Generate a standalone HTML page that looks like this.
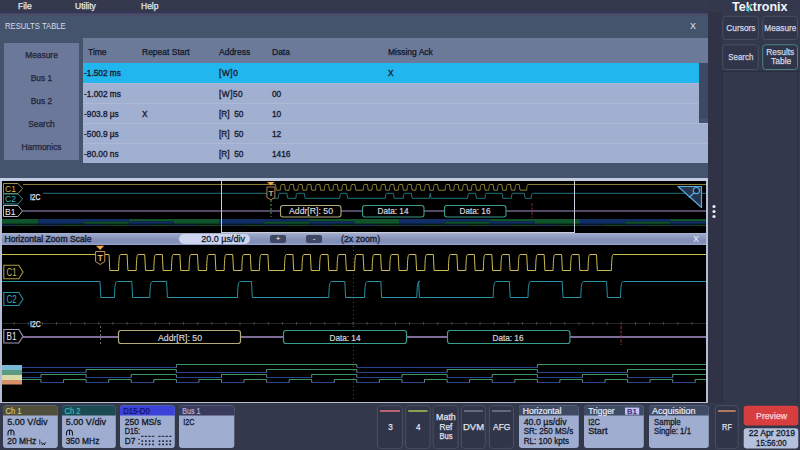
<!DOCTYPE html>
<html><head><meta charset="utf-8">
<style>
*{margin:0;padding:0;box-sizing:border-box}
html,body{width:800px;height:450px;overflow:hidden;background:#33384b;font-family:"Liberation Sans",sans-serif}
.a{position:absolute;white-space:nowrap}
#menu{left:0;top:0;width:800px;height:13px;background:linear-gradient(#363a4e 0,#34384c 80%,#33365a 100%)}
#menu span{position:absolute;top:0;color:#e6e8f0;font-size:8.5px;line-height:12px;-webkit-text-stroke:0.25px #e6e8f0}
#panel{left:0;top:13px;width:708px;height:165px;background:#43546c}
#title{left:5px;top:21px;color:#dfe4f0;font-size:9.4px;line-height:10px;transform:scaleX(0.82);transform-origin:left;color:#d4dcee}
#px{left:690px;top:21px;color:#dfe4f0;font-size:9px}
#lp{left:4px;top:43px;width:75px;height:117px;background:#6b7899}
#lp div{position:absolute;left:0;width:75px;text-align:center;color:#1e2438;font-size:8.4px;-webkit-text-stroke:0.25px #1e2438}
#thead{left:83px;top:38px;width:625px;height:25px;background:#6b7a99}
#thead span{position:absolute;top:9px;color:#111726;font-size:8.5px;-webkit-text-stroke:0.25px #111726}
.row{position:absolute;left:83px;width:625px;height:20px;background:#a1afd0;border-top:1px solid #aeb9d6}
.row span{position:absolute;top:5.2px;color:#1a2033;font-size:8.3px;-webkit-text-stroke:0.35px #1a2033}
#sidebar{left:708px;top:12px;width:92px;height:391px;background:#33384b}
.sb{position:absolute;border:1px solid #4a4f62;border-radius:3px;background:#2f3446;color:#d0d4e0;font-size:8.3px;text-align:center}
#scope{left:0;top:0}
.lbl{font-size:8px;fill:#fff;font-family:"Liberation Sans",sans-serif}
.badge{position:absolute;top:406px;height:42px;background:#a3aecb;border-radius:3px;overflow:hidden;white-space:nowrap}
.badge .h{height:11px;line-height:12px;font-size:8.4px;padding-left:4px;-webkit-text-stroke:0.2px currentColor}
.badge .b{color:#161b2b;font-size:8.8px;line-height:10px;padding-left:5px;padding-top:2px;-webkit-text-stroke:0.25px #161b2b}
.badge .b2{color:#161b2b;font-size:8.8px;line-height:10px;padding-left:5px;-webkit-text-stroke:0.25px #161b2b}
.badge .ic{height:10px;padding-left:5px;padding-top:1px}
.btn{position:absolute;top:405px;height:43px;border:1px solid #474c5e;border-radius:3px;background:#2e3344;color:#d8dce8;font-size:9px;text-align:center}
.btn i{position:absolute;left:3px;right:3px;top:5px;height:2px}
</style></head><body>
<div id="menu" class="a"><span style="left:18px">File</span><span style="left:75px">Utility</span><span style="left:141px">Help</span></div>
<div id="panel" class="a"></div>
<div class="a" style="left:0;top:13px;width:708px;height:3px;background:linear-gradient(#40425e,#4a4d69 40%,#474e68)"></div>
<div id="title" class="a">RESULTS TABLE</div>
<div id="px" class="a">X</div>
<div id="lp" class="a">
 <div style="top:7px">Measure</div>
 <div style="top:30px">Bus 1</div>
 <div style="top:53px">Bus 2</div>
 <div style="top:76px">Search</div>
 <div style="top:99px">Harmonics</div>
</div>
<div id="thead" class="a">
 <span style="left:5px">Time</span><span style="left:59px">Repeat Start</span><span style="left:136px">Address</span><span style="left:189px">Data</span><span style="left:305px">Missing Ack</span>
</div>
<div class="row" style="top:63px;background:#22b6ee;border-top:none;width:616px"><span style="left:1px">-1.502 ms</span><span style="left:136px;letter-spacing:0.6px">[W]0</span><span style="left:305px">X</span></div>
<div class="a" style="left:699px;top:63px;width:9px;height:56px;background:#3e4a64"></div>
<div class="row" style="top:83px;width:616px"><span style="left:1px">-1.002 ms</span><span style="left:136px;letter-spacing:0.5px">[W]50</span><span style="left:189px">00</span></div>
<div class="row" style="top:103px;width:616px"><span style="left:1px">-903.8 µs</span><span style="left:59px">X</span><span style="left:136px">[R]&nbsp; 50</span><span style="left:189px">10</span></div>
<div class="row" style="top:123px"><span style="left:1px">-500.9 µs</span><span style="left:136px">[R]&nbsp; 50</span><span style="left:189px">12</span></div>
<div class="row" style="top:143px"><span style="left:1px">-80.00 ns</span><span style="left:136px">[R]&nbsp; 50</span><span style="left:189px">1416</span></div>

<!-- sidebar -->
<div class="a" style="left:708px;top:0;width:92px;height:403px;background:#33384c"></div>
<div class="a" style="left:708px;top:12px;width:14px;height:391px;background:#2f3345"></div>
<div class="a" style="left:722px;top:72px;width:1px;height:331px;background:#2a2e3e"></div>
<div class="a" style="left:797px;top:72px;width:1px;height:331px;background:#2c3040"></div>
<div class="a" style="left:720px;top:71px;width:80px;height:1px;background:#2a2e3e"></div>

<!-- scope frame -->
<div class="a" style="left:0;top:178px;width:708px;height:226px;background:#b4bcd6"></div>
<div class="a" style="left:0;top:178px;width:708px;height:3px;background:#c4cce4"></div><div class="a" style="left:2px;top:181px;width:704px;height:52px;background:#000"></div>
<div class="a" style="left:2px;top:233px;width:704px;height:12px;background:linear-gradient(#aab4d0 0,#9aa6c8 15%,#8b97bd 40%,#808db6 70%,#8a96c0 90%,#a0aad0 100%)"></div>
<div class="a" style="left:2px;top:245px;width:704px;height:157px;background:#000"></div>
<div class="a" style="left:4.5px;top:233px;font-size:8.6px;line-height:12px;color:#141a30;-webkit-text-stroke:0.35px #141a30">Horizontal Zoom Scale</div>
<div class="a" style="left:179px;top:234px;width:71px;height:10px;border-radius:5px;background:#cdd6ee;font-size:9px;line-height:10px;color:#141a30;text-align:right;padding-right:5px;-webkit-text-stroke:0.3px #141a30">20.0 µs/div</div>
<div class="a" style="left:270px;top:235px;width:16px;height:8px;border-radius:2px;background:#3e4864;color:#fff;font-size:8px;line-height:8px;text-align:center">+</div>
<div class="a" style="left:306px;top:235px;width:16px;height:8px;border-radius:2px;background:#3e4864;color:#fff;font-size:8px;line-height:7px;text-align:center">-</div>
<div class="a" style="left:341px;top:233px;font-size:8.8px;line-height:12px;color:#141a30;-webkit-text-stroke:0.3px #141a30">(2x zoom)</div>
<div class="a" style="left:693px;top:233px;font-size:9px;line-height:12px;color:#f0f2f8">X</div>

<svg id="scope" class="a" width="800" height="450" viewBox="0 0 800 450">
<!-- grid -->
<path d="M2 323.5 H706" stroke="#262626" stroke-width="1" fill="none"/>
<path d="M14.1 322 V325 M28.2 322 V325 M42.4 322 V325 M56.5 322 V325 M70.6 322 V325 M84.7 322 V325 M98.8 322 V325 M113.0 322 V325 M127.1 322 V325 M141.2 322 V325 M155.3 322 V325 M169.4 322 V325 M183.6 322 V325 M197.7 322 V325 M211.8 322 V325 M225.9 322 V325 M240.0 322 V325 M254.2 322 V325 M268.3 322 V325 M282.4 322 V325 M296.5 322 V325 M310.6 322 V325 M324.8 322 V325 M338.9 322 V325 M353.0 322 V325 M367.1 322 V325 M381.2 322 V325 M395.4 322 V325 M409.5 322 V325 M423.6 322 V325 M437.7 322 V325 M451.8 322 V325 M466.0 322 V325 M480.1 322 V325 M494.2 322 V325 M508.3 322 V325 M522.4 322 V325 M536.6 322 V325 M550.7 322 V325 M564.8 322 V325 M578.9 322 V325 M593.0 322 V325 M607.2 322 V325 M621.3 322 V325 M635.4 322 V325 M649.5 322 V325 M663.6 322 V325 M677.8 322 V325 M691.9 322 V325" stroke="#444" stroke-width="1" fill="none"/>
<path d="M353.5 246 V402" stroke="#4a4a4a" stroke-width="1" stroke-dasharray="1 3" fill="none"/>
<!-- bus lines -->
<path d="M23 211 H706" stroke="#a890c8" stroke-width="1.2" fill="none"/>
<path d="M23 337 H706" stroke="#a890c8" stroke-width="1.5" fill="none"/>
<path d="M2 254.5 L109 254.5 L109.8 270.5 L118.6 270.5 C118.9 259.3 119.2 254.5 120.6 254.5 L127.1 254.5 L127.9 270.5 L136.2 270.5 C136.5 259.3 136.8 254.5 138.2 254.5 L144.7 254.5 L145.5 270.5 L153.8 270.5 C154.1 259.3 154.4 254.5 155.8 254.5 L162.3 254.5 L163.1 270.5 L171.4 270.5 C171.7 259.3 172 254.5 173.4 254.5 L179.9 254.5 L180.7 270.5 L189 270.5 C189.3 259.3 189.6 254.5 191 254.5 L197.5 254.5 L198.3 270.5 L206.6 270.5 C206.9 259.3 207.2 254.5 208.6 254.5 L215.1 254.5 L215.9 270.5 L224.2 270.5 C224.5 259.3 224.8 254.5 226.2 254.5 L232.7 254.5 L233.5 270.5 L241.8 270.5 C242.1 259.3 242.4 254.5 243.8 254.5 L250.3 254.5 L251.1 270.5 L259.4 270.5 C259.7 259.3 260 254.5 261.4 254.5 L267.9 254.5 L268.7 270.5 L284.4 270.5 C284.7 259.3 285 254.5 286.4 254.5 L292.9 254.5 L293.7 270.5 L301.9 270.5 C302.2 259.3 302.6 254.5 303.9 254.5 L310.4 254.5 L311.2 270.5 L319.5 270.5 C319.8 259.3 320.1 254.5 321.5 254.5 L328 254.5 L328.8 270.5 L337 270.5 C337.3 259.3 337.6 254.5 339 254.5 L345.5 254.5 L346.3 270.5 L354.6 270.5 C354.9 259.3 355.2 254.5 356.6 254.5 L363.1 254.5 L363.9 270.5 L372.1 270.5 C372.4 259.3 372.8 254.5 374.1 254.5 L380.6 254.5 L381.4 270.5 L389.7 270.5 C390 259.3 390.3 254.5 391.7 254.5 L398.2 254.5 L399 270.5 L407.2 270.5 C407.6 259.3 407.9 254.5 409.2 254.5 L415.8 254.5 L416.6 270.5 L424.8 270.5 C425.1 259.3 425.4 254.5 426.8 254.5 L433.3 254.5 L434.1 270.5 L448.4 270.5 C448.7 259.3 449 254.5 450.4 254.5 L456.9 254.5 L457.7 270.5 L465.8 270.5 C466.1 259.3 466.4 254.5 467.8 254.5 L474.3 254.5 L475.1 270.5 L483.3 270.5 C483.6 259.3 483.9 254.5 485.3 254.5 L491.8 254.5 L492.6 270.5 L500.8 270.5 C501.1 259.3 501.4 254.5 502.8 254.5 L509.2 254.5 L510.1 270.5 L518.2 270.5 C518.5 259.3 518.8 254.5 520.2 254.5 L526.7 254.5 L527.5 270.5 L535.6 270.5 C535.9 259.3 536.2 254.5 537.6 254.5 L544.1 254.5 L544.9 270.5 L553.1 270.5 C553.4 259.3 553.7 254.5 555.1 254.5 L561.6 254.5 L562.4 270.5 L570.5 270.5 C570.8 259.3 571.1 254.5 572.5 254.5 L579 254.5 L579.8 270.5 L588 270.5 C588.3 259.3 588.6 254.5 590 254.5 L596.5 254.5 L597.3 270.5 L611.4 270.5 C611.7 259.3 612 254.5 613.4 254.5 L706 254.5" stroke="#ccbc50" stroke-width="1" fill="none"/>
<path d="M2 281.5 L100 281.5 L100.8 297.5 L114.4 297.5 C114.7 286.3 115 281.5 117.4 281.5 L131.8 281.5 L132.6 297.5 L149.8 297.5 C150.1 286.3 150.4 281.5 152.8 281.5 L166.6 281.5 L167.4 297.5 L237.5 297.5 C237.8 286.3 238.1 281.5 240.5 281.5 L251.5 281.5 L252.3 297.5 L328.8 297.5 C329.1 286.3 329.4 281.5 331.8 281.5 L344.8 281.5 L345.6 297.5 L364.6 297.5 C364.9 286.3 365.2 281.5 367.6 281.5 L380.8 281.5 L381.6 297.5 L416.8 297.5 C417.1 286.3 417.4 281.5 419.8 281.5 L418.6 281.5 L419.4 297.5 L493.2 297.5 C493.5 286.3 493.8 281.5 496.2 281.5 L509.4 281.5 L510.2 297.5 L528 297.5 C528.3 286.3 528.6 281.5 531 281.5 L562.2 281.5 L563 297.5 L580.8 297.5 C581.1 286.3 581.4 281.5 583.8 281.5 L606.6 281.5 L607.4 297.5 L620.5 297.5 C620.8 286.3 621.1 281.5 623.5 281.5 L706 281.5" stroke="#2a90a4" stroke-width="1" fill="none"/>
<path d="M23 184.5 L275.5 184.5 L276.3 190.2 L280.3 190.2 C280.6 186.2 280.9 184.5 281.5 184.5 L284.6 184.5 L285.4 190.2 L289.1 190.2 C289.4 186.2 289.7 184.5 290.3 184.5 L293.4 184.5 L294.2 190.2 L297.9 190.2 C298.2 186.2 298.5 184.5 299.1 184.5 L302.1 184.5 L302.9 190.2 L306.7 190.2 C307 186.2 307.3 184.5 307.9 184.5 L310.9 184.5 L311.8 190.2 L315.5 190.2 C315.8 186.2 316.1 184.5 316.7 184.5 L319.8 184.5 L320.6 190.2 L324.3 190.2 C324.6 186.2 324.9 184.5 325.5 184.5 L328.6 184.5 L329.4 190.2 L333.1 190.2 C333.4 186.2 333.7 184.5 334.3 184.5 L337.4 184.5 L338.2 190.2 L341.9 190.2 C342.2 186.2 342.5 184.5 343.1 184.5 L346.1 184.5 L346.9 190.2 L350.7 190.2 C351 186.2 351.3 184.5 351.9 184.5 L354.9 184.5 L355.8 190.2 L363.2 190.2 C363.5 186.2 363.8 184.5 364.4 184.5 L367.4 184.5 L368.2 190.2 L372 190.2 C372.3 186.2 372.6 184.5 373.2 184.5 L376.2 184.5 L377 190.2 L380.8 190.2 C381.1 186.2 381.4 184.5 381.9 184.5 L385 184.5 L385.8 190.2 L389.5 190.2 C389.8 186.2 390.1 184.5 390.7 184.5 L393.8 184.5 L394.6 190.2 L398.3 190.2 C398.6 186.2 398.9 184.5 399.5 184.5 L402.5 184.5 L403.3 190.2 L407.1 190.2 C407.4 186.2 407.7 184.5 408.3 184.5 L411.3 184.5 L412.1 190.2 L415.9 190.2 C416.2 186.2 416.5 184.5 417.1 184.5 L420.1 184.5 L420.9 190.2 L424.6 190.2 C424.9 186.2 425.2 184.5 425.8 184.5 L428.9 184.5 L429.7 190.2 L433.4 190.2 C433.7 186.2 434 184.5 434.6 184.5 L437.6 184.5 L438.4 190.2 L445.2 190.2 C445.5 186.2 445.8 184.5 446.4 184.5 L449.4 184.5 L450.2 190.2 L453.9 190.2 C454.2 186.2 454.5 184.5 455.1 184.5 L458.2 184.5 L459 190.2 L462.6 190.2 C462.9 186.2 463.2 184.5 463.8 184.5 L466.9 184.5 L467.7 190.2 L471.4 190.2 C471.7 186.2 472 184.5 472.6 184.5 L475.6 184.5 L476.4 190.2 L480.1 190.2 C480.4 186.2 480.7 184.5 481.3 184.5 L484.3 184.5 L485.1 190.2 L488.8 190.2 C489.1 186.2 489.4 184.5 490 184.5 L493.1 184.5 L493.9 190.2 L497.5 190.2 C497.8 186.2 498.1 184.5 498.7 184.5 L501.8 184.5 L502.6 190.2 L506.3 190.2 C506.6 186.2 506.9 184.5 507.5 184.5 L510.5 184.5 L511.3 190.2 L515 190.2 C515.3 186.2 515.6 184.5 516.2 184.5 L519.2 184.5 L520 190.2 L526.7 190.2 C527 186.2 527.3 184.5 527.9 184.5 L706 184.5" stroke="#9a8c3c" stroke-width="0.9" fill="none"/>
<path d="M43 193.3 L271 193.3 L271.8 198.3 L278.2 198.3 C278.5 194.8 278.8 193.3 279.4 193.3 L286.9 193.3 L287.7 198.3 L295.9 198.3 C296.2 194.8 296.5 193.3 297.1 193.3 L304.3 193.3 L305.1 198.3 L339.8 198.3 C340.1 194.8 340.4 193.3 340.9 193.3 L346.8 193.3 L347.6 198.3 L385.4 198.3 C385.7 194.8 386 193.3 386.6 193.3 L393.4 193.3 L394.2 198.3 L403.3 198.3 C403.6 194.8 403.9 193.3 404.5 193.3 L411.4 193.3 L412.2 198.3 L429.4 198.3 C429.7 194.8 430 193.3 430.6 193.3 L430.3 193.3 L431.1 198.3 L467.6 198.3 C467.9 194.8 468.2 193.3 468.8 193.3 L475.7 193.3 L476.5 198.3 L485 198.3 C485.3 194.8 485.6 193.3 486.2 193.3 L502.1 193.3 L502.9 198.3 L511.4 198.3 C511.7 194.8 512 193.3 512.6 193.3 L524.3 193.3 L525.1 198.3 L531.2 198.3 C531.5 194.8 531.9 193.3 532.5 193.3 L706 193.3" stroke="#23808c" stroke-width="0.9" fill="none"/>
<path d="M176.4 364.5 H356.9 M537.4 364.5 H706 M86.1 369.5 H176.3 M266.6 369.5 H356.8 M447.1 369.5 H537.3 M627.5 369.5 H706 M41 374.5 H86.1 M131.2 374.5 H176.4 M221.5 374.5 H266.6 M311.7 374.5 H356.8 M402 374.5 H447.1 M492.2 374.5 H537.3 M582.4 374.5 H627.6 M672.7 374.5 H706 M22 379.5 H41 M63.6 379.5 H86.1 M108.7 379.5 H131.2 M153.8 379.5 H176.4 M198.9 379.5 H221.5 M244 379.5 H266.6 M289.2 379.5 H311.7 M334.3 379.5 H356.8 M379.4 379.5 H402 M424.5 379.5 H447.1 M469.6 379.5 H492.2 M514.8 379.5 H537.3 M559.9 379.5 H582.4 M605 379.5 H627.6 M650.1 379.5 H672.7 M695.2 379.5 H706" stroke="#3a9464" stroke-width="1" fill="none"/>
<path d="M22 367.5 H176.4 M356.9 367.5 H537.4 M22 372.5 H86.1 M176.3 372.5 H266.6 M356.8 372.5 H447.1 M537.3 372.5 H627.5 M22 377.5 H41 M86.1 377.5 H131.2 M176.4 377.5 H221.5 M266.6 377.5 H311.7 M356.8 377.5 H402 M447.1 377.5 H492.2 M537.3 377.5 H582.4 M627.6 377.5 H672.7 M41 382.5 H63.6 M86.1 382.5 H108.7 M131.2 382.5 H153.8 M176.4 382.5 H198.9 M221.5 382.5 H244 M266.6 382.5 H289.2 M311.7 382.5 H334.3 M356.8 382.5 H379.4 M402 382.5 H424.5 M447.1 382.5 H469.6 M492.2 382.5 H514.8 M537.3 382.5 H559.9 M582.4 382.5 H605 M627.6 382.5 H650.1 M672.7 382.5 H695.2" stroke="#2a4490" stroke-width="1" fill="none"/>
<path d="M176.4 364.5 V367.5 M356.9 364.5 V367.5 M537.4 364.5 V367.5 M86.1 369.5 V372.5 M176.3 369.5 V372.5 M266.6 369.5 V372.5 M356.8 369.5 V372.5 M447.1 369.5 V372.5 M537.3 369.5 V372.5 M627.5 369.5 V372.5 M41 374.5 V377.5 M86.1 374.5 V377.5 M131.2 374.5 V377.5 M176.4 374.5 V377.5 M221.5 374.5 V377.5 M266.6 374.5 V377.5 M311.7 374.5 V377.5 M356.8 374.5 V377.5 M402 374.5 V377.5 M447.1 374.5 V377.5 M492.2 374.5 V377.5 M537.3 374.5 V377.5 M582.4 374.5 V377.5 M627.6 374.5 V377.5 M672.7 374.5 V377.5 M41 379.5 V382.5 M63.6 379.5 V382.5 M86.1 379.5 V382.5 M108.7 379.5 V382.5 M131.2 379.5 V382.5 M153.8 379.5 V382.5 M176.4 379.5 V382.5 M198.9 379.5 V382.5 M221.5 379.5 V382.5 M244 379.5 V382.5 M266.6 379.5 V382.5 M289.2 379.5 V382.5 M311.7 379.5 V382.5 M334.3 379.5 V382.5 M356.8 379.5 V382.5 M379.4 379.5 V382.5 M402 379.5 V382.5 M424.5 379.5 V382.5 M447.1 379.5 V382.5 M469.6 379.5 V382.5 M492.2 379.5 V382.5 M514.8 379.5 V382.5 M537.3 379.5 V382.5 M559.9 379.5 V382.5 M582.4 379.5 V382.5 M605 379.5 V382.5 M627.6 379.5 V382.5 M650.1 379.5 V382.5 M672.7 379.5 V382.5 M695.2 379.5 V382.5" stroke="#7898a8" stroke-width="0.9" fill="none"/>
<path d="M2 220.2 H38.5 M128.7 220.2 H219 M309.2 220.2 H399.4 M489.7 220.2 H579.9 M670.2 220.2 H706 M2 222.6 H38.4 M83.6 222.6 H128.7 M173.8 222.6 H218.9 M264.1 222.6 H309.2 M354.3 222.6 H399.4 M444.5 222.6 H489.7 M534.8 222.6 H579.9 M625 222.6 H670.1" stroke="#17703a" stroke-width="2.4" fill="none" opacity="0.75"/>
<path d="M38.5 220.2 H128.7 M219 220.2 H309.2 M399.4 220.2 H489.7 M579.9 220.2 H670.2 M38.4 222.6 H83.6 M128.7 222.6 H173.8 M218.9 222.6 H264.1 M309.2 222.6 H354.3 M399.4 222.6 H444.5 M489.7 222.6 H534.8 M579.9 222.6 H625 M670.1 222.6 H706" stroke="#173c88" stroke-width="2.4" fill="none" opacity="0.75"/>
<path d="M15.9 225.2 H38.5 M61 225.2 H83.6 M106.1 225.2 H128.7 M151.3 225.2 H173.8 M196.4 225.2 H218.9 M241.5 225.2 H264.1 M286.6 225.2 H309.2 M331.7 225.2 H354.3 M376.9 225.2 H399.4 M422 225.2 H444.5 M467.1 225.2 H489.7 M512.2 225.2 H534.8 M557.3 225.2 H579.9 M602.5 225.2 H625 M647.6 225.2 H670.1 M692.7 225.2 H706" stroke="#1f6a40" stroke-width="0.9" fill="none"/>
<path d="M2 225.2 H15.9 M38.5 225.2 H61 M83.6 225.2 H106.1 M128.7 225.2 H151.3 M173.8 225.2 H196.4 M218.9 225.2 H241.5 M264.1 225.2 H286.6 M309.2 225.2 H331.7 M354.3 225.2 H376.9 M399.4 225.2 H422 M444.5 225.2 H467.1 M489.7 225.2 H512.2 M534.8 225.2 H557.3 M579.9 225.2 H602.5 M625 225.2 H647.6 M670.1 225.2 H692.7" stroke="#2a4a80" stroke-width="0.9" fill="none"/>
<!-- zoom box in overview -->
<rect x="221.5" y="180.5" width="353" height="52" stroke="#c8ccd8" stroke-width="1" fill="none"/>
<!-- decode boxes zoom -->
<rect x="118.5" y="330.5" width="122" height="13" rx="2.5" stroke="#b4ac78" stroke-width="1.2" fill="#000"/>
<rect x="283.5" y="330.5" width="123" height="13" rx="2.5" stroke="#3a9c8c" stroke-width="1.2" fill="#000"/>
<rect x="447.5" y="330.5" width="122.5" height="13" rx="2.5" stroke="#3a9c8c" stroke-width="1.2" fill="#000"/>
<text x="180" y="341" text-anchor="middle" class="lbl" style="font-size:8.7px;fill:#d4d4dc;stroke:#d4d4dc;stroke-width:0.2">Addr[R]: 50</text>
<text x="345" y="341" text-anchor="middle" class="lbl" style="font-size:8.2px;fill:#d4d4dc;stroke:#d4d4dc;stroke-width:0.2">Data: 14</text>
<text x="508" y="341" text-anchor="middle" class="lbl" style="font-size:8.2px;fill:#d4d4dc;stroke:#d4d4dc;stroke-width:0.2">Data: 16</text>
<!-- decode boxes overview -->
<rect x="280.5" y="205.5" width="60.5" height="11.5" rx="2.5" stroke="#b4ac78" stroke-width="1.1" fill="#000"/>
<rect x="362.5" y="205.5" width="61.5" height="11.5" rx="2.5" stroke="#3a9c8c" stroke-width="1.1" fill="#000"/>
<rect x="444.5" y="205.5" width="61.5" height="11.5" rx="2.5" stroke="#3a9c8c" stroke-width="1.1" fill="#000"/>
<text x="311" y="214" text-anchor="middle" class="lbl" style="font-size:8.7px;fill:#d4d4dc;stroke:#d4d4dc;stroke-width:0.2">Addr[R]: 50</text>
<text x="393" y="214" text-anchor="middle" class="lbl" style="font-size:8.2px;fill:#d4d4dc;stroke:#d4d4dc;stroke-width:0.2">Data: 14</text>
<text x="475" y="214" text-anchor="middle" class="lbl" style="font-size:8.2px;fill:#d4d4dc;stroke:#d4d4dc;stroke-width:0.2">Data: 16</text>
<!-- markers -->
<path d="M100.5 326 V346" stroke="#607858" stroke-width="1" stroke-dasharray="2 2"/>
<path d="M621 326 V345" stroke="#b03848" stroke-width="0.9" stroke-dasharray="3 1.5"/>
<path d="M271 200 V217" stroke="#60a050" stroke-width="1" stroke-dasharray="2 2"/>
<path d="M532 203 V218" stroke="#a03040" stroke-width="0.8" stroke-dasharray="3 1.5"/>
<!-- trigger markers -->
<path d="M96 245.7 H104.2 L100.1 250 Z" fill="#f4a848"/>
<path d="M95.6 251.5 H104.8 V261.5 L100.2 264.5 L95.6 261.5 Z" stroke="#c89060" stroke-width="1" fill="#000"/>
<text x="100.2" y="260.5" text-anchor="middle" style="font-size:9px;fill:#f0c890;font-family:Liberation Sans;stroke:#f0c890;stroke-width:0.2">T</text>
<path d="M267 182 H274.6 L270.8 185.6 Z" fill="#f0a040"/>
<path d="M266.9 187 H274.9 V197.5 L270.9 199.7 L266.9 197.5 Z" stroke="#c89060" stroke-width="0.9" fill="#000"/>
<text x="270.9" y="195.5" text-anchor="middle" style="font-size:8px;fill:#f0c890;font-family:Liberation Sans;stroke:#f0c890;stroke-width:0.2">T</text>
<!-- zoom labels -->
<path d="M3.8 265.3 H18.8 L23 272 L18.8 278.7 H3.8 Z" stroke="#a89a48" stroke-width="1.1" fill="#000"/>
<text x="6.5" y="275.8" textLength="10" lengthAdjust="spacingAndGlyphs" style="font-size:10px;fill:#c8bc68;font-family:Liberation Sans">C1</text>
<path d="M3.8 292.5 H18.8 L23 299 L18.8 305.5 H3.8 Z" stroke="#2a90a0" stroke-width="1.1" fill="#000"/>
<text x="6.5" y="303" textLength="10" lengthAdjust="spacingAndGlyphs" style="font-size:10px;fill:#40b0c0;font-family:Liberation Sans">C2</text>
<path d="M3.8 329.5 H18.8 L23 336.3 L18.8 343 H3.8 Z" stroke="#a898c0" stroke-width="1.1" fill="#000"/>
<text x="6.5" y="340" textLength="10" lengthAdjust="spacingAndGlyphs" style="font-size:10px;fill:#e8e4f4;font-family:Liberation Sans">B1</text>
<text x="30" y="326.5" textLength="10.6" lengthAdjust="spacingAndGlyphs" style="font-size:9.5px;fill:#e8e8f0;stroke:#e8e8f0;stroke-width:0.25;font-family:Liberation Sans">I2C</text>
<!-- overview labels -->
<path d="M3.5 183.5 H18 L22.5 188.5 L18 193.5 H3.5 Z" stroke="#9a8c48" stroke-width="1" fill="#000"/>
<text x="5" y="191.5" style="font-size:8.5px;fill:#c8b850;font-family:Liberation Sans">C1</text>
<path d="M3.5 194 H18 L22.5 199 L18 204 H3.5 Z" stroke="#2a8898" stroke-width="1" fill="#000"/>
<text x="5" y="202" style="font-size:8.5px;fill:#38b8c8;font-family:Liberation Sans">C2</text>
<path d="M3.5 205.5 H18 L22.5 211 L18 216.5 H3.5 Z" stroke="#b8b4c8" stroke-width="1" fill="#000"/>
<text x="5" y="214.5" style="font-size:8.5px;fill:#f0f0f8;font-family:Liberation Sans">B1</text>
<text x="30" y="200" textLength="10.5" lengthAdjust="spacingAndGlyphs" style="font-size:9px;fill:#e8e8f0;stroke:#e8e8f0;stroke-width:0.25;font-family:Liberation Sans">I2C</text>
<!-- digital label block -->
<rect x="2" y="365" width="20" height="5" fill="#7ab8d8"/>
<rect x="2" y="370" width="20" height="5" fill="#5a9a80"/>
<rect x="2" y="375" width="20" height="5" fill="#d8d8a8"/>
<rect x="2" y="380" width="20" height="4.5" fill="#d8906a"/>
<!-- magnifier -->
<path d="M678 186.5 H701.5 V207.5 Z" stroke="#58ace0" stroke-width="1.2" stroke-linejoin="round" fill="#26344e"/>
<circle cx="696.4" cy="190.6" r="3.1" stroke="#58ace0" stroke-width="1.2" fill="#1a2438"/>
<path d="M694.2 192.8 L689 197.5" stroke="#58ace0" stroke-width="1.3"/>
<!-- ellipsis -->
<circle cx="714" cy="206.5" r="1.6" fill="#e8ecf4"/>
<circle cx="714" cy="211.5" r="1.6" fill="#e8ecf4"/>
<circle cx="714" cy="216.5" r="1.6" fill="#e8ecf4"/>
</svg>

<!-- bottom bar -->
<div class="a" style="left:0;top:403px;width:800px;height:47px;background:#33384b"></div>
<svg class="a" style="left:0;top:0" width="800" height="450" viewBox="0 0 800 450" font-family="Liberation Sans">
<rect x="3" y="405.6" width="54.8" height="42.4" rx="3" fill="#9fadd0"/><path d="M3 415.4 V408.6 Q3 405.6 6 405.6 H54.8 Q57.8 405.6 57.8 408.6 V415.4 Z" fill="#4f4f3c"/>
<rect x="62" y="405.6" width="53.8" height="42.4" rx="3" fill="#9fadd0"/><path d="M62 415.4 V408.6 Q62 405.6 65 405.6 H112.8 Q115.8 405.6 115.8 408.6 V415.4 Z" fill="#1a4b52"/>
<rect x="120" y="405.6" width="54.8" height="42.4" rx="3" fill="#9fadd0"/><path d="M120 415.4 V408.6 Q120 405.6 123 405.6 H171.8 Q174.8 405.6 174.8 408.6 V415.4 Z" fill="#3a42da"/>
<rect x="179" y="405.6" width="55.3" height="42.4" rx="3" fill="#9fadd0"/><path d="M179 415.4 V408.6 Q179 405.6 182 405.6 H231.3 Q234.3 405.6 234.3 408.6 V415.4 Z" fill="#3a3a5c"/>
<rect x="519" y="405.6" width="59.8" height="42.4" rx="3" fill="#9fadd0"/><path d="M519 415.4 V408.6 Q519 405.6 522 405.6 H575.8 Q578.8 405.6 578.8 408.6 V415.4 Z" fill="#3f4b65"/>
<rect x="584" y="405.6" width="59.8" height="42.4" rx="3" fill="#9fadd0"/><path d="M584 415.4 V408.6 Q584 405.6 587 405.6 H640.8 Q643.8 405.6 643.8 408.6 V415.4 Z" fill="#3f4b65"/>
<rect x="649" y="405.6" width="59.8" height="42.4" rx="3" fill="#9fadd0"/><path d="M649 415.4 V408.6 Q649 405.6 652 405.6 H705.8 Q708.8 405.6 708.8 408.6 V415.4 Z" fill="#3f4b65"/>
<text x="5.6" y="414.2" font-size="8.41" fill="#cfc770" stroke="#cfc770" stroke-width="0.2" textLength="15.9" lengthAdjust="spacingAndGlyphs">Ch 1</text>
<text x="64.6" y="414.2" font-size="8.41" fill="#40b8bc" stroke="#40b8bc" stroke-width="0.2" textLength="15.9" lengthAdjust="spacingAndGlyphs">Ch 2</text>
<text x="123.2" y="414.2" font-size="8.41" fill="#101062" stroke="#101062" stroke-width="0.2" textLength="26.5" lengthAdjust="spacingAndGlyphs">D15-D0</text>
<text x="182.2" y="414.2" font-size="8.41" fill="#b4b4dc" stroke="#b4b4dc" stroke-width="0.2" textLength="18.4" lengthAdjust="spacingAndGlyphs">Bus 1</text>
<text x="522.7" y="414.2" font-size="8.41" fill="#e8ecf8" stroke="#e8ecf8" stroke-width="0.2" textLength="38.8" lengthAdjust="spacingAndGlyphs">Horizontal</text>
<text x="588.2" y="414.2" font-size="8.41" fill="#e8ecf8" stroke="#e8ecf8" stroke-width="0.2" textLength="26.5" lengthAdjust="spacingAndGlyphs">Trigger</text>
<text x="652.0" y="414.2" font-size="8.41" fill="#e8ecf8" stroke="#e8ecf8" stroke-width="0.2" textLength="43.6" lengthAdjust="spacingAndGlyphs">Acquisition</text>
<rect x="625" y="407.6" width="14.2" height="7.1" fill="#c8c0f8"/>
<text x="627.0" y="414.0" font-size="8.12" fill="#302870" stroke="#302870" stroke-width="0.25" textLength="10.0" lengthAdjust="spacingAndGlyphs">B1</text>
<text x="7.2" y="424.6" font-size="8.41" fill="#161b2b" stroke="#161b2b" stroke-width="0.3" textLength="40.3" lengthAdjust="spacingAndGlyphs">5.00 V/div</text>
<text x="7.2" y="444.4" font-size="8.41" fill="#161b2b" stroke="#161b2b" stroke-width="0.3" textLength="29.1" lengthAdjust="spacingAndGlyphs">20 MHz</text>
<text x="65.7" y="424.6" font-size="8.41" fill="#161b2b" stroke="#161b2b" stroke-width="0.3" textLength="40.3" lengthAdjust="spacingAndGlyphs">5.00 V/div</text>
<text x="65.7" y="444.4" font-size="8.41" fill="#161b2b" stroke="#161b2b" stroke-width="0.3" textLength="33.7" lengthAdjust="spacingAndGlyphs">350 MHz</text>
<path d="M8.0 435.5 V433 A3 3 0 0 1 14.0 433 V435.5 M11.0 430.5 V435" stroke="#161b2b" stroke-width="1.1" fill="none"/>
<path d="M66.5 435.5 V433 A3 3 0 0 1 72.5 433 V435.5 M69.5 430.5 V435" stroke="#161b2b" stroke-width="1.1" fill="none"/>
<path d="M39.8 439.5 V444.5 M41.5 442 L42.5 445 L43.5 443 L44.5 445 L45.3 442" stroke="#161b2b" stroke-width="0.8" fill="none"/>
<text x="124.7" y="424.6" font-size="8.41" fill="#161b2b" stroke="#161b2b" stroke-width="0.3" textLength="36.3" lengthAdjust="spacingAndGlyphs">250 MS/s</text>
<text x="124.7" y="434.4" font-size="8.41" fill="#161b2b" stroke="#161b2b" stroke-width="0.3" textLength="15.3" lengthAdjust="spacingAndGlyphs">D15:</text>
<text x="124.7" y="444.4" font-size="8.41" fill="#161b2b" stroke="#161b2b" stroke-width="0.3" textLength="15.3" lengthAdjust="spacingAndGlyphs">D7 :</text>
<path d="M141.0 436.3 h2.6 M144.6 436.3 h2.6 M148.2 436.3 h2.6 M151.8 436.3 h2.6 M158.2 436.3 h2.6 M161.8 436.3 h2.6 M165.4 436.3 h2.6 M169.0 436.3 h2.6" stroke="#161b2b" stroke-width="1"/>
<rect x="141.5" y="440.3" width="1.6" height="1.6" fill="#161b2b"/><rect x="141.5" y="443.6" width="1.6" height="1.6" fill="#161b2b"/><rect x="145.1" y="440.3" width="1.6" height="1.6" fill="#161b2b"/><rect x="145.1" y="443.6" width="1.6" height="1.6" fill="#161b2b"/><rect x="148.7" y="440.3" width="1.6" height="1.6" fill="#161b2b"/><rect x="148.7" y="443.6" width="1.6" height="1.6" fill="#161b2b"/><rect x="152.3" y="440.3" width="1.6" height="1.6" fill="#161b2b"/><rect x="152.3" y="443.6" width="1.6" height="1.6" fill="#161b2b"/><rect x="158.7" y="440.3" width="1.6" height="1.6" fill="#161b2b"/><rect x="158.7" y="443.6" width="1.6" height="1.6" fill="#161b2b"/><rect x="162.3" y="440.3" width="1.6" height="1.6" fill="#161b2b"/><rect x="162.3" y="443.6" width="1.6" height="1.6" fill="#161b2b"/><rect x="165.9" y="440.3" width="1.6" height="1.6" fill="#161b2b"/><rect x="165.9" y="443.6" width="1.6" height="1.6" fill="#161b2b"/><rect x="169.5" y="440.3" width="1.6" height="1.6" fill="#161b2b"/><rect x="169.5" y="443.6" width="1.6" height="1.6" fill="#161b2b"/>
<text x="183.2" y="424.6" font-size="8.41" fill="#161b2b" stroke="#161b2b" stroke-width="0.3" textLength="11.2" lengthAdjust="spacingAndGlyphs">I2C</text>
<text x="523.7" y="424.6" font-size="8.41" fill="#161b2b" stroke="#161b2b" stroke-width="0.3" textLength="42.9" lengthAdjust="spacingAndGlyphs">40.0 µs/div</text>
<text x="523.7" y="434.4" font-size="8.41" fill="#161b2b" stroke="#161b2b" stroke-width="0.3" textLength="49.5" lengthAdjust="spacingAndGlyphs">SR: 250 MS/s</text>
<text x="523.7" y="444.4" font-size="8.41" fill="#161b2b" stroke="#161b2b" stroke-width="0.3" textLength="45.4" lengthAdjust="spacingAndGlyphs">RL: 100 kpts</text>
<text x="588.2" y="424.6" font-size="8.41" fill="#161b2b" stroke="#161b2b" stroke-width="0.3" textLength="11.8" lengthAdjust="spacingAndGlyphs">I2C</text>
<text x="588.2" y="434.4" font-size="8.41" fill="#161b2b" stroke="#161b2b" stroke-width="0.3" textLength="19.4" lengthAdjust="spacingAndGlyphs">Start</text>
<text x="654.0" y="424.6" font-size="8.41" fill="#161b2b" stroke="#161b2b" stroke-width="0.3" textLength="26.7" lengthAdjust="spacingAndGlyphs">Sample</text>
<text x="654.0" y="434.4" font-size="8.41" fill="#161b2b" stroke="#161b2b" stroke-width="0.3" textLength="37.0" lengthAdjust="spacingAndGlyphs">Single: 1/1</text>
<rect x="377.5" y="405.7" width="25.0" height="42.7" rx="3" fill="#30354a" stroke="#4a4f62" stroke-width="1"/><path d="M380 411 H400" stroke="#c86878" stroke-width="1.8"/>
<rect x="405.7" y="405.7" width="24.3" height="42.7" rx="3" fill="#30354a" stroke="#4a4f62" stroke-width="1"/><path d="M408.2 411 H427.5" stroke="#90b050" stroke-width="1.8"/>
<rect x="433.2" y="405.7" width="24.9" height="42.7" rx="3" fill="#30354a" stroke="#4a4f62" stroke-width="1"/>
<rect x="461.5" y="405.7" width="23.8" height="42.7" rx="3" fill="#30354a" stroke="#4a4f62" stroke-width="1"/><path d="M464 411 H482.8" stroke="#6c7080" stroke-width="1.8"/>
<rect x="489.5" y="405.7" width="24.0" height="42.7" rx="3" fill="#30354a" stroke="#4a4f62" stroke-width="1"/><path d="M492 411 H511" stroke="#6c7080" stroke-width="1.8"/>
<rect x="715.5" y="405.7" width="22.7" height="42.7" rx="3" fill="#30354a" stroke="#4a4f62" stroke-width="1"/><path d="M718 411 H735.7" stroke="#c08060" stroke-width="1.8"/>
<text x="388.3" y="429.9" font-size="9.28" fill="#e0e4ee" stroke="#e0e4ee" stroke-width="0.25" textLength="4.5" lengthAdjust="spacingAndGlyphs">3</text>
<text x="415.9" y="429.9" font-size="9.28" fill="#e0e4ee" stroke="#e0e4ee" stroke-width="0.25" textLength="4.5" lengthAdjust="spacingAndGlyphs">4</text>
<text x="436.1" y="419.7" font-size="8.99" fill="#e0e4ee" stroke="#e0e4ee" stroke-width="0.25" textLength="19.7" lengthAdjust="spacingAndGlyphs">Math</text>
<text x="439.5" y="429.9" font-size="8.99" fill="#e0e4ee" stroke="#e0e4ee" stroke-width="0.25" textLength="12.9" lengthAdjust="spacingAndGlyphs">Ref</text>
<text x="439.5" y="439.4" font-size="8.99" fill="#e0e4ee" stroke="#e0e4ee" stroke-width="0.25" textLength="12.9" lengthAdjust="spacingAndGlyphs">Bus</text>
<text x="463.0" y="429.9" font-size="9.28" fill="#e0e4ee" stroke="#e0e4ee" stroke-width="0.25" textLength="21.0" lengthAdjust="spacingAndGlyphs">DVM</text>
<text x="493.0" y="429.9" font-size="9.28" fill="#e0e4ee" stroke="#e0e4ee" stroke-width="0.25" textLength="17.5" lengthAdjust="spacingAndGlyphs">AFG</text>
<text x="722.1" y="429.9" font-size="9.28" fill="#e0e4ee" stroke="#e0e4ee" stroke-width="0.25" textLength="9.9" lengthAdjust="spacingAndGlyphs">RF</text>
<rect x="743.7" y="405.7" width="54.6" height="19.7" rx="3" fill="#d83e40"/>
<text x="756.1" y="418.6" font-size="8.41" fill="#f8d8d8" stroke="#f8d8d8" stroke-width="0.25" textLength="30.9" lengthAdjust="spacingAndGlyphs">Preview</text>
<rect x="743.7" y="428.2" width="54.6" height="20.2" rx="3" fill="#b4c0dc"/>
<text x="748.8" y="436.0" font-size="8.41" fill="#161b2b" stroke="#161b2b" stroke-width="0.3" textLength="46.2" lengthAdjust="spacingAndGlyphs">22 Apr 2019</text>
<text x="756.1" y="445.6" font-size="8.41" fill="#161b2b" stroke="#161b2b" stroke-width="0.3" textLength="30.4" lengthAdjust="spacingAndGlyphs">15:56:00</text>
<rect x="722.7" y="16.3" width="35.6" height="23.2" rx="3" fill="#30354a" stroke="#4a4f62" stroke-width="1"/>
<rect x="762.7" y="16.3" width="34.8" height="23.2" rx="3" fill="#30354a" stroke="#4a4f62" stroke-width="1"/>
<rect x="722.7" y="44.7" width="35.6" height="24.8" rx="3" fill="#30354a" stroke="#4a4f62" stroke-width="1"/>
<rect x="762.7" y="44.7" width="34.8" height="24.8" rx="3" fill="#30354a" stroke="#4a8484" stroke-width="1"/>
<text x="726.3" y="30.8" font-size="9.28" fill="#d4d8e4" stroke="#d4d8e4" stroke-width="0.25" textLength="29.2" lengthAdjust="spacingAndGlyphs">Cursors</text>
<text x="764.3" y="30.8" font-size="9.28" fill="#d4d8e4" stroke="#d4d8e4" stroke-width="0.25" textLength="32.0" lengthAdjust="spacingAndGlyphs">Measure</text>
<text x="728.3" y="60.0" font-size="9.28" fill="#d4d8e4" stroke="#d4d8e4" stroke-width="0.25" textLength="25.0" lengthAdjust="spacingAndGlyphs">Search</text>
<text x="766.3" y="55.0" font-size="9.28" fill="#d4d8e4" stroke="#d4d8e4" stroke-width="0.25" textLength="28.0" lengthAdjust="spacingAndGlyphs">Results</text>
<text x="771.0" y="64.2" font-size="9.28" fill="#d4d8e4" stroke="#d4d8e4" stroke-width="0.25" textLength="20.3" lengthAdjust="spacingAndGlyphs">Table</text>
<text x="732" y="11.2" font-size="13.6" font-weight="bold" fill="#f4f6fa" textLength="55.6" lengthAdjust="spacingAndGlyphs">Tektronix</text>
<path d="M746.8 6.8 L748.5 10.8 L751 4.2" stroke="#3ab4a4" stroke-width="1.5" fill="none"/>
</svg>
</body></html>
